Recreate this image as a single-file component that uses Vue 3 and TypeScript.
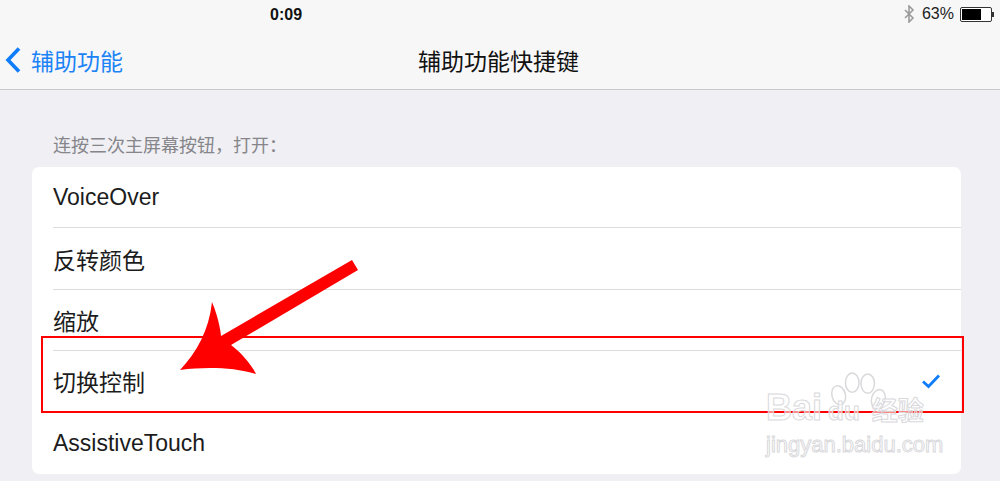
<template>
  <div class="screen">
    <header class="nav">
      <div class="status">
        <span class="time">0:09</span>
        <div class="status-right">
          <svg class="bt" viewBox="0 0 12 18"><path d="M2 5l8 8-4 4V1l4 4-8 8" fill="none" stroke="#9a9a9a" stroke-width="1.6"/></svg>
          <span class="pct">63%</span>
          <div class="battery"><div class="battery-fill" :style="{ width: level + '%' }"></div></div>
          <div class="battery-tip"></div>
        </div>
      </div>
      <div class="nav-bar">
        <div class="back">
          <svg class="chevron" viewBox="0 0 18 28"><path d="M15 2.5L4 14l11 11.500" fill="none" stroke="#0f7dfa" stroke-width="3.600"/></svg>
          <span>辅助功能</span>
        </div>
        <div class="title">辅助功能快捷键</div>
      </div>
    </header>

    <main class="content">
      <div class="section-label">连按三次主屏幕按钮，打开：</div>
      <ul class="card">
        <li v-for="item in items" :key="item.label" class="row">
          <span>{{ item.label }}</span>
          <svg v-if="item.checked" class="check" viewBox="0 0 20 16"><path d="M2 8.500l5.500 5L18 2.500" fill="none" stroke="#0f7dfa" stroke-width="2.800"/></svg>
        </li>
      </ul>
    </main>

    <!-- annotation drawn over the screenshot -->
    <div class="highlight"></div>
    <svg class="arrow" viewBox="0 0 1000 481">
      <path fill="#fe0000" d="M352 260L358 270L231 345C240 352 250 362 256 374C232 367 205 367 180 370C197 352 209 330 212 302C218 316 221 332 221 336Z"/>
    </svg>

    <div class="watermark">
      <svg class="paw" viewBox="0 0 60 60">
        <g fill="rgba(255,255,255,.5)" stroke="#d9d9dc" stroke-width="1.500">
          <ellipse cx="9" cy="24" rx="7" ry="10" transform="rotate(-15 9 24)"/>
          <ellipse cx="23" cy="11" rx="7" ry="10"/>
          <ellipse cx="39" cy="12" rx="7" ry="10"/>
          <ellipse cx="50" cy="28" rx="7" ry="10" transform="rotate(15 50 28)"/>
        </g>
      </svg>
      <div class="wm-main"><span>Bai</span><span class="wm-du">du</span><span class="wm-cn">经验</span></div>
      <div class="wm-url">jingyan.baidu.com</div>
    </div>
  </div>
</template>

<script setup lang="ts">
const level = 68;

const items = [
  { label: 'VoiceOver', checked: false },
  { label: '反转颜色', checked: false },
  { label: '缩放', checked: false },
  { label: '切换控制', checked: true },
  { label: 'AssistiveTouch', checked: false },
];
</script>

<style>
html, body {
  margin: 0;
  background: #efeff4;
}
</style>

<style scoped>
.screen {
  position: relative;
  width: 1000px;
  height: 481px;
  overflow: hidden;
  background: #efeff4;
  color: #1a1a1a;
  font-family: "Liberation Sans", "Noto Sans CJK SC", sans-serif;
}

.nav {
  height: 89px;
  background: #f7f7f8;
  border-bottom: 1px solid #c8c8ca;
}

.status {
  position: relative;
  display: flex;
  justify-content: flex-end;
  height: 30px;
  padding-right: 6px;
}

.time {
  position: absolute;
  left: 270px;
  top: 6px;
  font-size: 16px;
  line-height: 18px;
  font-weight: 700;
  color: #111;
  -webkit-text-stroke: 0;
}

.status-right {
  display: flex;
  align-items: center;
  height: 28px;
}

.bt {
  width: 12px;
  height: 18px;
  margin-right: 7px;
}

.pct {
  font-size: 16px;
  color: #222;
  margin-right: 6px;
}

.battery {
  width: 28px;
  height: 11px;
  border: 1px solid #333;
  border-radius: 2px;
  background: #fff;
  padding: 1px;
}

.battery-fill {
  height: 100%;
  background: #000;
}

.battery-tip {
  width: 2px;
  height: 5px;
  background: #333;
}

.nav-bar {
  position: relative;
  display: flex;
  align-items: center;
  height: 59px;
}

.back {
  display: flex;
  align-items: center;
  gap: 9px;
  padding-left: 4px;
  font-size: 23px;
  color: #1b83f5;
}

.chevron {
  width: 18px;
  height: 28px;
}

.title {
  position: absolute;
  left: 0;
  right: 3px;
  text-align: center;
  font-size: 23px;
  color: #111;
}

.content {
  padding: 44px 39px 0 32px;
}

.section-label {
  padding-left: 21px;
  height: 33px;
  font-size: 18px;
  line-height: 24px;
  color: #86868a;
}

.card {
  list-style: none;
  margin: 0;
  padding: 0;
  background: #fff;
  border-radius: 7px;
  height: 307px;
  display: grid;
  grid-template-rows: repeat(5, 1fr);
}

.row {
  display: flex;
  align-items: center;
  justify-content: space-between;
  margin-left: 21px;
  padding-right: 20px;
  font-size: 23px;
  color: #1c1c1c;
  border-bottom: 1px solid #dcdcde;
}

.row:last-child {
  border-bottom: none;
}

.check {
  width: 20px;
  height: 16px;
}

.highlight {
  position: absolute;
  left: 41px;
  top: 336px;
  width: 919px;
  height: 73px;
  border: 2px solid #fe0000;
}

.arrow {
  position: absolute;
  inset: 0;
  width: 1000px;
  height: 481px;
}

.watermark {
  position: absolute;
  left: 766px;
  top: 372px;
  width: 190px;
  color: rgba(255, 255, 255, 0.55);
  -webkit-text-stroke: 1px #d9d9dc;
}

.paw {
  position: absolute;
  left: 64px;
  top: 0;
  width: 58px;
  height: 58px;
}

.wm-main {
  position: absolute;
  left: 0;
  top: 14px;
  font-size: 36px;
  line-height: 44px;
  font-weight: 700;
  white-space: nowrap;
}

.wm-du {
  font-size: 26px;
  margin-left: 6px;
}

.wm-cn {
  font-size: 26px;
  margin-left: 12px;
}

.wm-url {
  position: absolute;
  left: 0;
  top: 60px;
  font-size: 22px;
  line-height: 26px;
  white-space: nowrap;
}
</style>
